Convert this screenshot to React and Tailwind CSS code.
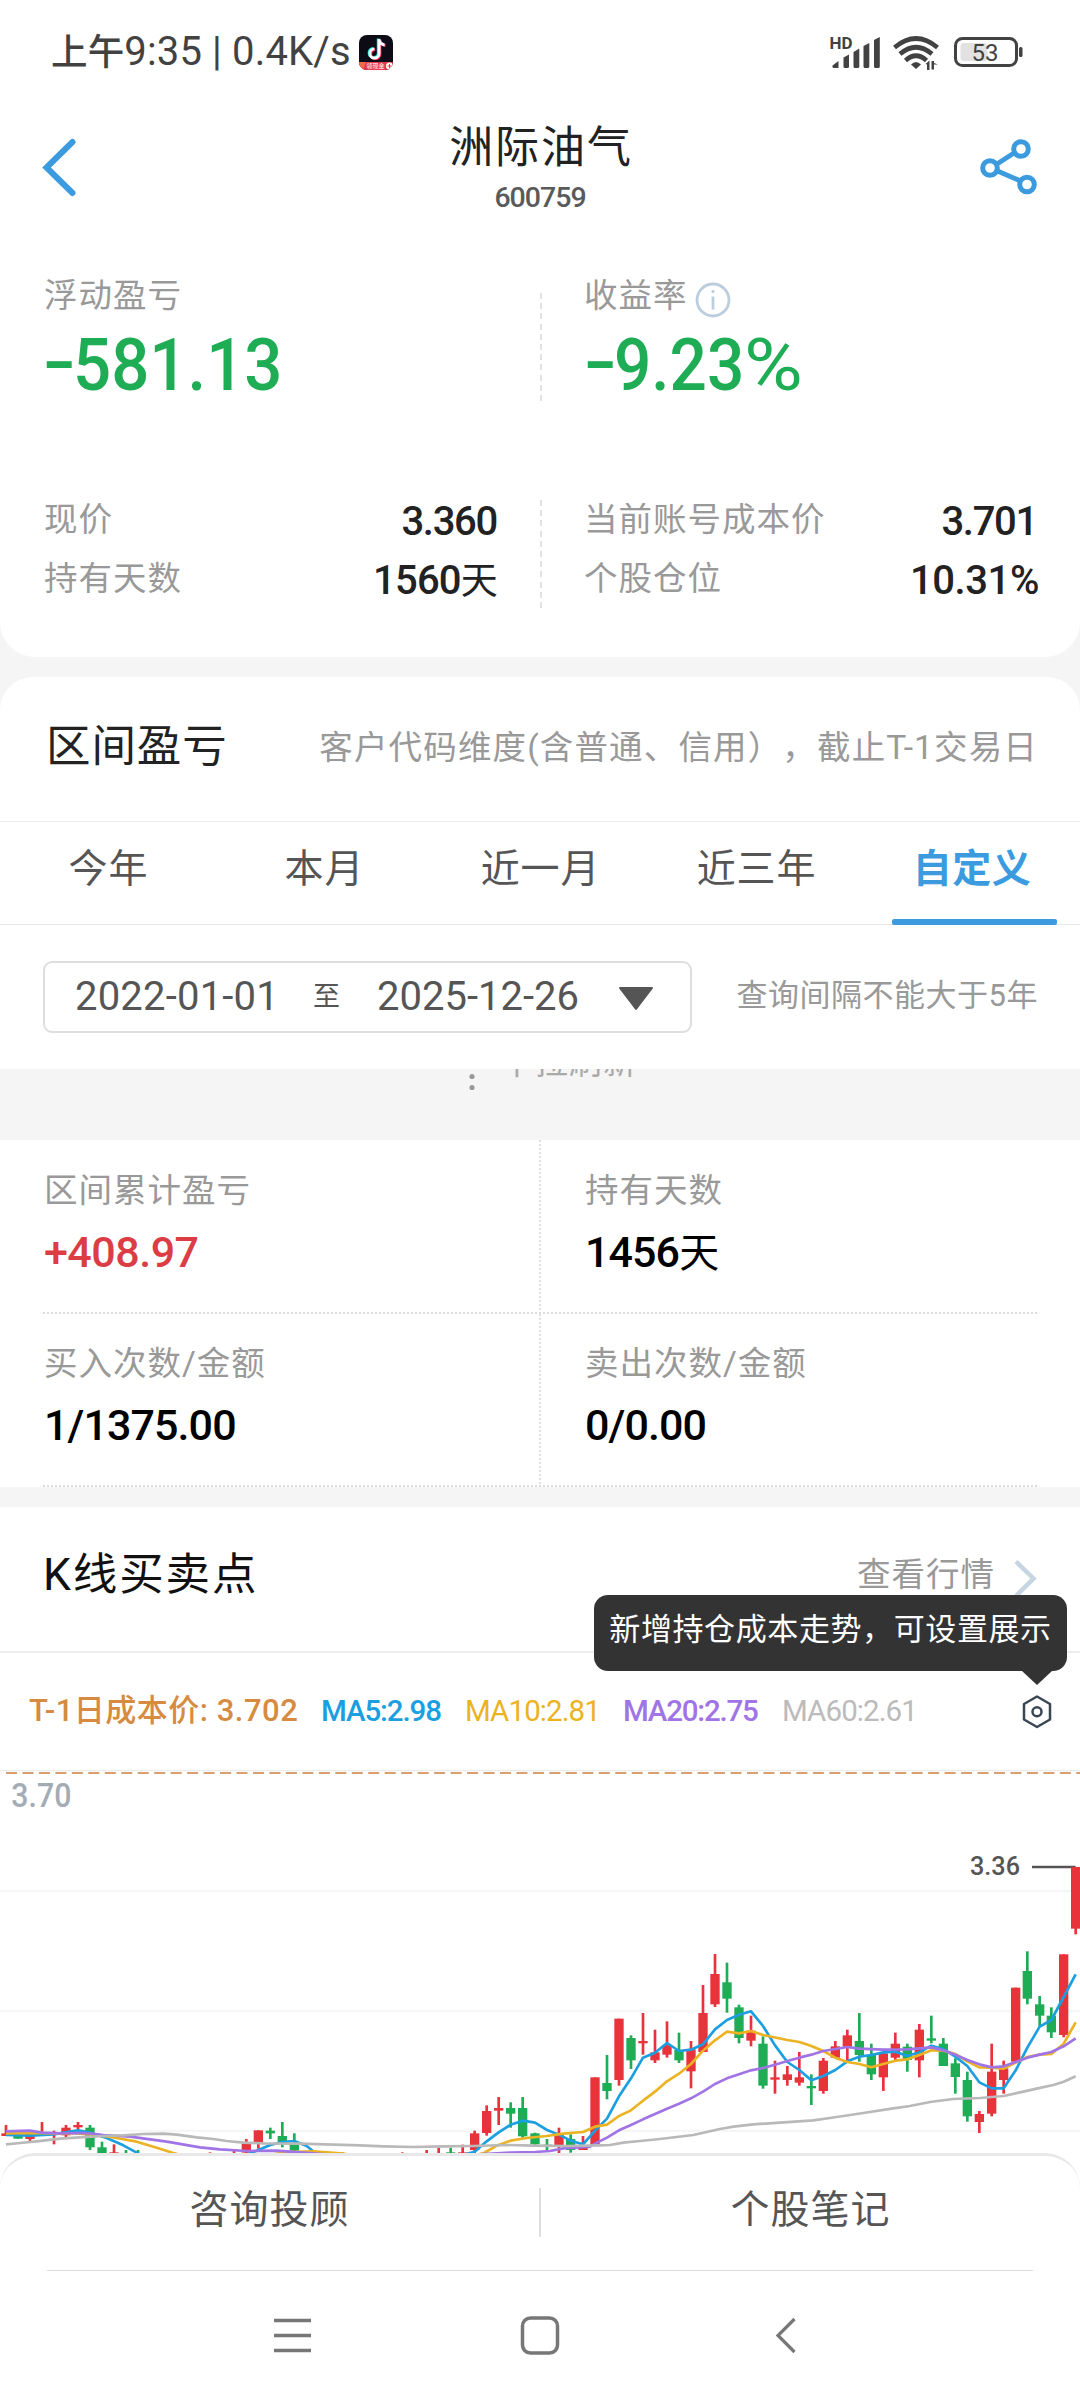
import React from "react";

const UP = "#e8333b";
const DOWN = "#1eac54";

// [x, wickTop, wickBottom, bodyTop, bodyBottom, rising]
const CANDLES = [
  [18, 795, 828, 820, 828, 1], [54, 820, 836, 820, 836, 0], [90, 820, 843, 820, 837, 1],
  [126, 786, 820, 816, 822, 1], [162, 812, 853, 817, 822, 1], [198, 795, 833, 803, 826, 1],
  [234, 786, 810, 795, 802, 1], [270, 795, 870, 803, 862, 0], [306, 845, 880, 862, 880, 0],
  [342, 853, 885, 877, 885, 1], [378, 870, 885, 882, 885, 0], [414, 870, 885, 882, 885, 0],
  [630, 877, 885, 882, 885, 1], [702, 873, 885, 882, 885, 1],
  [739, 837, 880, 852, 878, 1], [775, 811, 866, 811, 846, 1], [811, 803, 837, 812, 820, 0],
  [847, 786, 862, 828, 846, 0], [883, 820, 885, 850, 872, 0], [1028, 877, 885, 882, 885, 1],
  [1207, 877, 885, 882, 885, 1], [1280, 870, 885, 882, 885, 1], [1316, 863, 885, 882, 885, 1],
  [1352, 863, 885, 877, 885, 0], [1388, 854, 885, 877, 885, 1], [1424, 812, 880, 820, 870, 1],
  [1460, 736, 827, 753, 819, 1], [1496, 711, 795, 744, 752, 1], [1532, 727, 803, 744, 761, 0],
  [1568, 711, 833, 744, 829, 0], [1605, 818, 860, 820, 853, 0], [1641, 837, 870, 854, 858, 0],
  [1677, 803, 880, 823, 857, 1], [1712, 823, 878, 837, 870, 0], [1749, 828, 870, 863, 870, 1],
  [1785, 652, 853, 652, 853, 1], [1821, 585, 718, 669, 693, 0], [1857, 476, 677, 476, 660, 1],
  [1893, 526, 627, 534, 601, 0], [1929, 459, 584, 543, 550, 1], [1965, 509, 609, 577, 601, 1],
  [2001, 484, 593, 556, 584, 1], [2037, 518, 609, 570, 601, 0], [2073, 543, 685, 568, 634, 1],
  [2109, 375, 576, 459, 576, 1], [2145, 282, 441, 342, 433, 1], [2181, 308, 458, 367, 416, 0],
  [2217, 434, 550, 442, 534, 0], [2253, 467, 559, 512, 542, 1], [2289, 529, 686, 551, 677, 0],
  [2325, 602, 701, 652, 659, 1], [2362, 618, 677, 643, 660, 1], [2398, 576, 677, 652, 668, 1],
  [2434, 643, 735, 678, 685, 0], [2470, 594, 701, 602, 693, 1], [2506, 543, 593, 559, 593, 1],
  [2542, 509, 600, 526, 560, 1], [2578, 459, 605, 543, 585, 0], [2614, 551, 660, 585, 643, 0],
  [2650, 578, 693, 580, 652, 1], [2686, 518, 600, 551, 593, 1], [2722, 551, 635, 560, 600, 0],
  [2758, 492, 652, 509, 601, 1], [2794, 467, 550, 535, 542, 0], [2830, 534, 618, 551, 618, 0],
  [2866, 595, 701, 610, 651, 0], [2902, 635, 785, 660, 769, 0], [2938, 753, 819, 762, 786, 1],
  [2975, 551, 769, 635, 761, 1], [3011, 602, 701, 625, 660, 1], [3047, 383, 605, 383, 605, 1],
  [3082, 274, 433, 333, 416, 0], [3119, 408, 500, 433, 467, 0], [3154, 442, 534, 467, 517, 0],
  [3191, 283, 532, 283, 525, 1], [3227, 21, 223, 21, 206, 1],
];

const LINES = [
  ["#1b9fe0", "18,825 90,827 160,823 234,811 270,818 320,834 370,856 414,880 460,910 700,900 760,876 811,855 847,846 883,843 920,858 950,882 1000,905 1350,895 1424,875 1460,844 1496,817 1532,794 1568,782 1605,788 1641,810 1677,824 1712,842 1749,853 1785,812 1821,776 1857,709 1893,655 1929,593 1965,578 2001,549 2037,573 2073,569 2109,553 2145,508 2181,480 2217,464 2253,454 2289,498 2325,556 2362,606 2398,630 2434,661 2470,648 2506,630 2542,604 2578,590 2614,585 2650,577 2686,575 2722,588 2758,577 2794,557 2830,567 2866,590 2902,618 2938,667 2975,685 3011,685 3047,631 3082,563 3119,500 3154,480 3191,411 3227,343"],
  ["#ebb322", "18,820 90,819 160,820 230,820 270,823 310,828 350,834 410,845 470,863 520,879 600,900 780,890 860,876 940,874 1030,881 1100,895 1400,892 1452,879 1490,857 1532,842 1580,834 1640,828 1690,821 1749,816 1785,800 1821,794 1857,768 1893,751 1929,722 1965,695 2001,664 2037,641 2073,612 2109,572 2145,541 2181,515 2217,520 2253,513 2289,525 2362,540 2398,546 2434,558 2470,573 2506,593 2542,606 2578,612 2614,622 2650,612 2686,602 2722,598 2758,585 2794,571 2830,572 2866,582 2902,604 2938,622 2975,623 3011,626 3047,608 3082,591 3119,584 3154,582 3191,551 3227,487"],
  ["#a174e6", "18,814 90,812 126,818 180,820 230,819 270,820 310,825 390,830 500,845 600,862 660,868 740,873 830,872 940,880 1080,892 1300,890 1450,882 1530,878 1605,876 1650,873 1690,865 1770,860 1785,851 1821,833 1857,811 1893,795 1929,778 1965,762 2001,746 2037,731 2073,715 2109,695 2145,672 2181,655 2217,643 2253,631 2289,624 2325,614 2362,603 2398,593 2434,584 2470,573 2506,567 2542,561 2578,566 2650,569 2722,568 2794,562 2830,571 2866,584 2902,600 2938,613 2975,622 3011,619 3047,606 3082,593 3119,584 3154,576 3191,559 3227,535"],
  ["#b9b9b9", "18,853 60,849 110,844 180,836 240,832 310,828 370,826 430,822 490,821 530,824 590,832 640,837 680,843 730,848 790,850 900,851 1000,854 1080,856 1150,859 1240,861 1330,859 1420,858 1520,855 1600,857 1700,858 1800,856 1830,855 1870,848 1920,843 1980,837 2080,825 2160,807 2200,800 2260,793 2340,788 2440,781 2490,774 2590,759 2680,745 2730,738 2790,726 2860,717 2940,714 3011,708 3060,697 3110,686 3160,675 3191,665 3227,649"],
];

function StatusBar() {
  return (
    <div className="flex h-[104px] items-center pl-[51px] pr-[57px] text-[#424242]">
      <span className="pt-px text-[40px] leading-[48px] tracking-[0.150px] whitespace-pre"><span className="text-[36.500px] font-medium">上午</span>9:35 | 0.4K/s</span>
      <svg className="ml-auto" width="34" height="35" viewBox="0 0 34 35">
        <defs>
          <clipPath id="app"><rect width="34" height="35" rx="8" /></clipPath>
        </defs>
        <g clipPath="url(#app)">
          <rect width="34" height="35" fill="#0c0b16" />
          <g fill="none" strokeWidth="2.800">
            <path d="M19.200 3.500v14.200a4.600 4.600 0 1 1-4.800-4.400M19.200 4c.6 3 3 5 5.500 5.400" stroke="#25e5df" />
            <path d="M21 4.700v14.200a4.600 4.600 0 1 1-4.800-4.400M21 5.200c.6 3 3 5 5.500 5.400" stroke="#fe2c55" />
            <path d="M20.100 4.100v14.200a4.600 4.600 0 1 1-4.800-4.400M20.100 4.600c.6 3 3 5 5.500 5.400" stroke="#fff" />
          </g>
          <path d="M0 27h34v8H0z" fill="#e8384f" />
          <path d="M0 27h7l-3 8H0z" fill="#f26a4a" />
          <circle cx="30.500" cy="31" r="3.500" fill="#fff" />
          <path d="M30.500 29v4M28.500 31h4" stroke="#e8384f" />
          <text x="7.500" y="33.300" fontSize="6" fill="#fff">领现金</text>
        </g>
      </svg>
      <svg className="ml-[436px] shrink-0" width="194" height="40" viewBox="829 32 194 40">
        <text x="829.500" y="48.500" fontSize="16.500" fontWeight="700" fill="#424242" textLength="23" lengthAdjust="spacingAndGlyphs">HD</text>
        <g fill="#424242">
          <path d="M832.500 65.500l6-4.500v7h-4.500q-1.500 0-1.500-1zM843.500 57.500l5.500-3v12q0 1.500-1.500 1.500h-2.500q-1.500 0-1.500-1.500zM853.500 52l5.800-3.500v18q0 1.500-1.500 1.500h-2.800q-1.500 0-1.500-1.500zM863.500 46l5.800-3v23.500q0 1.500-1.500 1.500h-2.800q-1.500 0-1.500-1.500zM874 40l5.800-3v29.500q0 1.500-1.500 1.500h-2.800q-1.500 0-1.500-1.500z" />
          <path d="M916 69l-5-4.500q5-5 10 0z" />
          <path d="M925.500 64l4-3.500v9.500h-2.500v-5.500zM931.500 61h2.500v2l4 1.500h-4v5h-2.500z" />
        </g>
        <g fill="none" stroke="#424242" strokeWidth="4.600">
          <path d="M894.500 47.500q21.500-18 43 0" />
          <path d="M900 54q16-13.500 32 0" />
          <path d="M905.500 60.500q10.500-9.500 21 0" />
        </g>
        <rect x="960.500" y="43" width="27" height="18" rx="3" fill="#e2e2e2" />
        <rect x="955.500" y="38.500" width="61" height="27" rx="7" fill="none" stroke="#424242" strokeWidth="3" />
        <rect x="1019" y="47" width="3.500" height="10" rx="1.500" fill="#424242" />
        <text x="971.500" y="60.800" fontSize="24" fill="#424242" textLength="27">53</text>
      </svg>
    </div>
  );
}

function Header() {
  return (
    <header className="grid h-[126px] grid-cols-[1fr_auto_1fr] items-center pl-[42px] pr-[42px]">
      <svg width="36" height="60" viewBox="0 0 36 60" fill="none" stroke="#3b9bde" strokeWidth="6" strokeLinecap="round" strokeLinejoin="round">
        <path d="M30.500 5L4.500 30.500L30.500 56" strokeLinejoin="miter" />
      </svg>
      <div className="flex h-full flex-col items-center pt-[18px]">
        <h1 className="pl-[2px] text-[44px] leading-[52px] tracking-[1.900px] text-[#222]">洲际油气</h1>
        <p className="mt-[8px] text-[28.500px] leading-[32px] font-medium tracking-[-1px] text-[#5a5a5a]">600759</p>
      </div>
      <svg className="justify-self-end" width="58" height="60" viewBox="980 137 58 60" fill="none" stroke="#3b9bde" strokeWidth="5">
        <path d="M997 164l17-11M997.500 171l22 9.500" />
        <circle cx="1021" cy="149" r="7.300" />
        <circle cx="990" cy="168" r="7.300" />
        <circle cx="1027" cy="184.500" r="7.300" />
      </svg>
    </header>
  );
}

const Dash = ({ className }) => (
  <div className={"w-[2px] bg-[repeating-linear-gradient(to_bottom,#e2e2e2_0_6px,transparent_6px_10.200px)] " + className} />
);

const label = "text-[33.500px] leading-[40px] tracking-[1px] text-[#999]";
const value = "pt-[2px] text-[40px] leading-[40px] font-medium text-[#222]";
const Minus = () => <span className="inline-block w-[30px] origin-left -translate-y-[3px] scale-x-[1.32]">-</span>;

function Summary() {
  return (
    <section className="h-[427px] rounded-b-[35px] bg-white pt-[46px]">
      <div className="flex">
        <div className="w-[540px] pl-[43px]">
          <p className={label + " pl-px"}>浮动盈亏</p>
          <p className="mt-[13px] text-[73px] leading-[72px] font-medium text-[#1eac54]"><Minus /><span className="inline-block w-[207px] origin-left scale-x-[0.920]">581.13</span></p>
        </div>
        <Dash className="mt-[17px] h-[108px]" />
        <div className="pl-[42px]">
          <div className="flex">
            <p className={label}>收益率</p>
            <svg className="mt-[6px] ml-[7px]" width="36" height="36" viewBox="0 0 36 36" fill="none" stroke="#bccddd" strokeWidth="2.800">
              <circle cx="18" cy="18" r="16" />
              <path d="M18 14.500v13" />
              <circle cx="18" cy="9.500" r="1.200" fill="#bccddd" strokeWidth="1" />
            </svg>
          </div>
          <p className="mt-[11px] text-[73px] leading-[72px] font-medium whitespace-nowrap text-[#1eac54]"><Minus /><span className="inline-block w-[130px] origin-left scale-x-[0.900]">9.23</span><span className="inline-block origin-left scale-x-[1.100] font-normal">%</span></p>
        </div>
      </div>
      <div className="mt-[99px] flex">
        <div className="flex w-[540px] flex-col gap-[17px] pl-[44px] pr-[43px]">
          <div className="flex justify-between"><span className={label}>现价</span><span className={value + " tracking-[-1.300px]"}>3.360</span></div>
          <div className="flex justify-between"><span className={label}>持有天数</span><span className={value + " tracking-[-0.800px]"}>1560<span className="text-[37px] font-normal">天</span></span></div>
        </div>
        <Dash className="h-[108px]" />
        <div className="flex w-[538px] flex-col gap-[17px] pl-[42px]">
          <div className="flex justify-between pr-[43px]"><span className={label}>当前账号成本价</span><span className={value + " tracking-[-1.300px]"}>3.701</span></div>
          <div className="flex justify-between pr-[41px]"><span className={label}>个股仓位</span><span className={value + " tracking-[-0.400px]"}>10.31%</span></div>
        </div>
      </div>
    </section>
  );
}

const TABS = ["今年", "本月", "近一月", "近三年", "自定义"];

function RangeSection() {
  return (
    <section className="mt-[20px] h-[392px] rounded-t-[33px] bg-white">
      <div className="flex h-[145px] items-center justify-between border-b border-[#e8eaea] pl-[46px] pr-[42px]">
        <h2 className="-mt-[4px] text-[44.500px] leading-[52px] tracking-[0.900px] text-[#222]">区间盈亏</h2>
        <p className="-mt-[3px] text-[33.500px] leading-[40px] tracking-[1.150px] whitespace-pre text-[#999] [text-spacing-trim:space-all]">客户代码维度(含普通、信用），截止T-1交易日</p>
      </div>
      <div className="grid h-[103px] grid-cols-5 border-b border-[#e8eaea]">
        {TABS.map((t) =>
          t === "自定义" ? (
            <div key={t} className="relative flex flex-col items-center pt-[23px] text-[39px] leading-[48px] font-bold tracking-[0.500px] text-[#3b9bde]">
              {t}
              <span className="absolute -bottom-[1px] left-[28px] h-[6px] w-[165px] rounded-[2px] bg-[#3b9bde]" />
            </div>
          ) : (
            <div key={t} className="pt-[23px] pl-px text-center text-[39px] leading-[48px] tracking-[0.900px] text-[#555]">{t}</div>
          )
        )}
      </div>
      <div className="flex items-center justify-between pl-[43px] pr-[42px] pt-[36px]">
        <div className="flex h-[72px] w-[649px] items-center rounded-[9px] border-2 border-[#dedede] pl-[30px] text-[#555]">
          <span className="w-[238px] text-[40px] leading-[40px] tracking-[0.200px]">2022-01-01</span>
          <span className="w-[64px] text-[27px] leading-[40px]">至</span>
          <span className="text-[40px] leading-[40px]">2025-12-26</span>
          <svg className="ml-[39px] mt-[3px]" width="36" height="24" viewBox="0 0 36 24"><path d="M2 1h32L18 22z" fill="#555" stroke="#555" strokeWidth="2" strokeLinejoin="round" /></svg>
        </div>
        <p className="-mt-[2px] text-[31px] leading-[40px] tracking-[0.500px] text-[#999]">查询间隔不能大于5年</p>
      </div>
    </section>
  );
}

function PullHint() {
  return (
    <div className="flex h-[71px] items-start overflow-hidden pl-[468px] text-[#999]">
      <svg width="8" height="24" viewBox="0 0 8 24" fill="#999"><circle cx="4" cy="7.500" r="2.600" /><circle cx="4" cy="18.500" r="2.600" /></svg>
      <span className="-mt-[26px] ml-[25px] text-[33px] leading-[40px] tracking-[1px] text-[#aaa]">下拉刷新</span>
    </div>
  );
}

function Cell({ title, children, right, red }) {
  return (
    <div className={"h-[173px] " + (right ? "pl-[44px]" : "w-[539px] pl-[44px]")}>
      <p className={label}>{title}</p>
      <p className={"mt-[21px] text-[43px] leading-[40px] font-medium " + (red ? "tracking-[-0.500px] text-[#dc3c44]" : "tracking-[-0.900px] text-black")}>{children}</p>
    </div>
  );
}

const DottedLine = () => (
  <div className="mx-[43px] h-[2px] bg-[repeating-linear-gradient(to_right,#dcdcdc_0_2px,transparent_2px_4px)]" />
);
const DottedColumn = ({ className }) => (
  <div className={"w-[2px] bg-[repeating-linear-gradient(to_bottom,#e0e0e0_0_2px,transparent_2px_4px)] " + className} />
);

function Totals() {
  return (
    <section className="h-[347px] bg-white">
      <div className="flex h-[172px] pt-[31px]">
        <Cell title="区间累计盈亏" red>+408.97</Cell>
        <DottedColumn className="-mt-[31px] h-[172px]" />
        <Cell title="持有天数" right>1456<span className="text-[40px] font-normal">天</span></Cell>
      </div>
      <DottedLine />
      <div className="flex h-[171px] pt-[30px]">
        <Cell title="买入次数/金额">1/1375.00</Cell>
        <DottedColumn className="-mt-[30px] h-[171px]" />
        <Cell title="卖出次数/金额" right>0/0.00</Cell>
      </div>
      <DottedLine />
    </section>
  );
}

function Chart() {
  return (
    <svg className="block" width="1080" height="420" viewBox="0 -270 3240 1260">
      <g fill="#f6f6f6">
        <rect y="-270" width="3240" height="4" fill="#ececec" />
        <rect y="90" width="3240" height="7" />
        <rect y="450" width="3240" height="7" />
        <rect y="809" width="3240" height="7" />
      </g>
      <path d="M18 -261H3240" stroke="#d99f6e" strokeWidth="6" strokeDasharray="33 16.400" />
      <text x="34" y="-158" fontSize="99" fontWeight="500" fill="#a3abb4" textLength="180" lengthAdjust="spacingAndGlyphs">3.70</text>
      <text x="2910" y="44" fontSize="80" fontWeight="500" fill="#555" textLength="150" lengthAdjust="spacingAndGlyphs">3.36</text>
      <path d="M3096 21H3227" stroke="#555" strokeWidth="8" />
      {CANDLES.map(([x, wt, wb, bt, bb, up]) => (
        <g key={x} fill={up ? UP : DOWN}>
          <rect x={x - 4} y={wt} width="8" height={wb - wt} />
          <rect x={x - 14} y={bt} width="28" height={bb - bt} />
        </g>
      ))}
      {LINES.map(([color, points]) => (
        <polyline key={color} points={points} fill="none" stroke={color} strokeWidth="8" strokeLinejoin="round" />
      ))}
    </svg>
  );
}

function KLine() {
  return (
    <section className="relative mt-[20px] h-[683px] bg-white">
      <div className="flex h-[146px] items-center justify-between border-b-2 border-[#ececec] pl-[43px] pr-[42px]">
        <h2 className="mt-[-8px] text-[44.500px] leading-[52px] tracking-[1.900px] text-[#111]">K线买卖点</h2>
        <div className="flex items-center">
          <span className="-mt-[9px] text-[33.500px] leading-[40px] tracking-[1px] text-[#999]">查看行情</span>
          <svg className="ml-[19px]" width="24" height="42" viewBox="0 0 24 42" fill="none" stroke="#c6d5e1" strokeWidth="4.500"><path d="M2 3.500L19.500 20.500L2 38" /></svg>
        </div>
      </div>
      <div className="flex h-[115px] items-center pl-[29px] text-[29.500px] leading-[36px] whitespace-nowrap">
        <span className="w-[292px] text-[31px] font-medium tracking-[0.500px] text-[#d68b40]">T-1日成本价: 3.702</span>
        <span className="w-[144px] font-medium tracking-[-1.100px] text-[#1b9fe0]">MA5:2.98</span>
        <span className="w-[158px] tracking-[-0.900px] text-[#ebb322]">MA10:2.81</span>
        <span className="w-[159px] font-medium tracking-[-1.200px] text-[#a174e6]">MA20:2.75</span>
        <span className="tracking-[-0.900px] text-[#bbb]">MA60:2.61</span>
        <svg className="mt-[2px] ml-auto mr-[27px]" width="32" height="36" viewBox="0 0 32 36" fill="none" stroke="#3a4654" strokeWidth="2.500" strokeLinejoin="round">
          <path d="M16 2.500L29 10v15.500L16 33L3 25.500V10z" />
          <circle cx="16" cy="17.700" r="4.500" />
        </svg>
      </div>
      <div className="h-[2px]" />
      <Chart />
      <div className="absolute top-[88px] left-[594px] flex h-[76px] w-[473px] justify-center rounded-[14px] bg-[#333] pt-[15px] text-[31px] leading-[40px] tracking-[0.600px] whitespace-nowrap text-white">
        新增持仓成本走势，可设置展示
        <svg className="absolute top-[76px] left-[427px]" width="32" height="14" viewBox="0 0 32 14"><path d="M1 0h30L16 14z" fill="#333" /></svg>
      </div>
    </section>
  );
}

function BottomBar() {
  return (
    <footer className="relative -mt-[37px] h-[247px] rounded-t-[35px] border-t-[3px] border-[#e8e8e8] bg-white">
      <div className="flex h-[113px] items-center">
        <div className="flex-1 pb-[6px] text-center text-[39px] leading-[48px] tracking-[1px] text-[#555]">咨询投顾</div>
        <div className="h-[49px] w-[2px] bg-[#dedede]" />
        <div className="flex-1 pb-[6px] text-center text-[39px] leading-[48px] tracking-[1px] text-[#555]">个股笔记</div>
      </div>
      <div className="mx-[47px] mt-px h-px bg-[#dedede]" />
      <div className="flex items-start pt-[44px] pl-[273px]">
        <svg width="39" height="42" viewBox="0 0 39 42" stroke="#777" strokeWidth="3.500"><path d="M1 5.500h37M1 20.500h37M1 35.500h37" /></svg>
        <svg className="ml-[208px]" width="40" height="42" viewBox="0 0 40 42" fill="none" stroke="#777" strokeWidth="3.500"><rect x="2.500" y="3" width="35" height="35" rx="8" /></svg>
        <svg className="ml-[215px]" width="22" height="42" viewBox="0 0 22 42" fill="none" stroke="#777" strokeWidth="3.200"><path d="M19.500 4L3 20.500L19.500 37" /></svg>
      </div>
    </footer>
  );
}

export default function App() {
  return (
    <div className="h-[2400px] w-[1080px] overflow-hidden bg-[#f5f5f5] font-[Roboto,'Noto_Sans_CJK_SC',sans-serif]">
      <div className="bg-white">
        <StatusBar />
        <Header />
      </div>
      <Summary />
      <RangeSection />
      <PullHint />
      <Totals />
      <KLine />
      <BottomBar />
    </div>
  );
}
